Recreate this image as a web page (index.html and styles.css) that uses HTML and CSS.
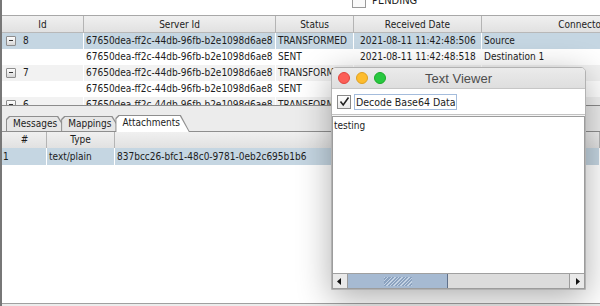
FILE: index.html
```html
<!DOCTYPE html>
<html lang="en">
<head>
    <meta charset="UTF-8">
    <title>Message Browser</title>
    <link rel="stylesheet" href="styles.css">
</head>
<body>
<div class="app">
    <div class="filter-bar">
        <span class="filter-check"></span>
        <span class="filter-label">PENDING</span>
    </div>

    <div class="msg-table">
        <div class="msg-row head">
            <div>Id</div>
            <div>Server Id</div>
            <div>Status</div>
            <div>Received Date</div>
            <div>Connector</div>
        </div>
        <div class="msg-row selected">
            <div class="id-cell"><span class="toggle"></span>8</div>
            <div>67650dea-ff2c-44db-96fb-b2e1098d6ae8</div>
            <div>TRANSFORMED</div>
            <div class="date">2021-08-11 11:42:48:506</div>
            <div>Source</div>
        </div>
        <div class="msg-row">
            <div class="id-cell"></div>
            <div>67650dea-ff2c-44db-96fb-b2e1098d6ae8</div>
            <div>SENT</div>
            <div class="date">2021-08-11 11:42:48:518</div>
            <div>Destination 1</div>
        </div>
        <div class="msg-row alt">
            <div class="id-cell"><span class="toggle"></span>7</div>
            <div>67650dea-ff2c-44db-96fb-b2e1098d6ae8</div>
            <div>TRANSFORMED</div>
            <div class="date">2021-08-11 11:42:48:402</div>
            <div>Source</div>
        </div>
        <div class="msg-row">
            <div class="id-cell"></div>
            <div>67650dea-ff2c-44db-96fb-b2e1098d6ae8</div>
            <div>SENT</div>
            <div class="date">2021-08-11 11:42:48:411</div>
            <div>Destination 1</div>
        </div>
        <div class="msg-row alt">
            <div class="id-cell"><span class="toggle"></span>6</div>
            <div>67650dea-ff2c-44db-96fb-b2e1098d6ae8</div>
            <div>TRANSFORMED</div>
            <div class="date">2021-08-11 11:42:48:300</div>
            <div>Source</div>
        </div>
    </div>

    <div class="lower">
        <div class="tabs">
            <div class="tab">Messages</div>
            <div class="tab">Mappings</div>
            <div class="tab active">Attachments</div>
        </div>
        <div class="attach">
            <div class="att-row head">
                <div>#</div>
                <div>Type</div>
                <div></div>
            </div>
            <div class="att-row selected">
                <div>1</div>
                <div>text/plain</div>
                <div>837bcc26-bfc1-48c0-9781-0eb2c695b1b6</div>
            </div>
        </div>
    </div>

    <div class="viewer">
        <div class="titlebar">
            <span class="light red"></span>
            <span class="light yellow"></span>
            <span class="light green"></span>
            <span class="title">Text Viewer</span>
        </div>
        <div class="decode-row">
            <span class="check">
                <svg width="11" height="11" viewBox="0 0 11 11"><polyline points="1.5,5.5 4.2,9 9.5,1.5" fill="none" stroke="#222" stroke-width="1.6"/></svg>
            </span>
            <span class="decode-label">Decode Base64 Data</span>
        </div>
        <div class="text-area">
            <div class="text-body">testing</div>
            <div class="hscroll">
                <div class="sb-btn sb-left">
                    <svg width="6" height="7" viewBox="0 0 6 7"><polygon points="0,3.5 4,0 4,7" fill="#111"/></svg>
                </div>
                <div class="sb-thumb"><div class="sb-grip"></div></div>
                <div class="sb-track"></div>
                <div class="sb-btn sb-right">
                    <svg width="6" height="7" viewBox="0 0 6 7"><polygon points="2,0 6,3.5 2,7" fill="#111"/></svg>
                </div>
            </div>
        </div>
    </div>
</div>
</body>
</html>
```

FILE: styles.css
```css
body {
    margin: 0;
    width: 600px;
    height: 306px;
    overflow: hidden;
    font-family: "DejaVu Sans", sans-serif;
    font-stretch: condensed;
    font-size: 10px;
    color: #1c1c1c;
}
.app {
    position: relative;
    height: 306px;
    border-left: 2px solid #777;
    display: flex;
    flex-direction: column;
    background: #ececec;
}
.filter-bar {
    height: 15px;
    width: 596px;
    background: #fff;
    border-bottom: 1px solid #a8a8a8;
    border-right: 1px solid #a8a8a8;
    display: flex;
    align-items: flex-end;
    padding-left: 350px;
    box-sizing: content-box;
    overflow: hidden;
}
.filter-check {
    width: 12px;
    height: 12px;
    border: 1px solid #9a9a9a;
    background: #fafafa;
    margin-bottom: 7px;
}
.filter-label {
    margin-left: 6px;
    font-size: 11px;
    line-height: 12px;
    margin-bottom: 8px;
}
.msg-table {
    height: 89px;
    overflow: hidden;
    background: #fff;
    border-bottom: 1px solid #8c8c8c;
}
.msg-row {
    display: grid;
    grid-template-columns: 82px 192px 78px 128px 200px;
    height: 16px;
    line-height: 16px;
    white-space: nowrap;
}
.msg-row > div {
    overflow: hidden;
    padding-left: 2px;
    border-right: 1px solid #fff;
}
.msg-row .date {
    padding-left: 6px;
}
.msg-row.head {
    height: 17px;
    line-height: 17px;
    background: linear-gradient(#f0f0f0, #e1e1e1);
    border-bottom: 1px solid #b8b8b8;
    box-sizing: border-box;
}
.msg-row.head > div {
    text-align: center;
    padding-left: 0;
    border-right: 1px solid #b4b4b4;
}
.selected {
    background: #c5d6e2;
}
.alt {
    background: #f2f2f2;
}
.id-cell {
    display: flex;
    align-items: center;
}
.toggle {
    position: relative;
    width: 8px;
    height: 8px;
    margin: 0 7px 0 2px;
    border: 1px solid #8d8d8d;
    border-radius: 1px;
    background: linear-gradient(#fff, #d6d6d6);
}
.toggle::after {
    content: "";
    position: absolute;
    left: 2px;
    top: 3px;
    width: 4px;
    height: 1px;
    background: #333;
}
.lower {
    flex: 1;
    display: flex;
    flex-direction: column;
    padding-top: 9px;
}
.tabs {
    display: flex;
    align-items: flex-end;
    height: 16px;
    padding-left: 4px;
    border-bottom: 1px solid #8e8e8e;
}
.tab {
    position: relative;
    z-index: 1;
    height: 15px;
    line-height: 15px;
    padding: 0 10px 0 7px;
    margin-right: -6px;
}
.tab::before,
.tab::after {
    content: "";
    position: absolute;
    z-index: -1;
    clip-path: polygon(0 3px, 3px 0, calc(100% - 9px) 0, 100% 100%, 0 100%);
}
.tab::before {
    inset: 0;
    background: #8e8e8e;
}
.tab::after {
    inset: 1px 1px 0 1px;
    background: #e6e6e6;
}
.tab.active {
    z-index: 2;
    height: 17px;
    line-height: 16px;
    margin-bottom: -1px;
}
.tab.active::after {
    background: #fff;
}
.attach {
    flex: 1;
    background: #fff;
    border-bottom: 1px solid #a0a0a0;
    margin-bottom: 2px;
}
.att-row {
    display: grid;
    grid-template-columns: 45px 68px 1fr;
    height: 17px;
    line-height: 17px;
    white-space: nowrap;
}
.att-row > div {
    padding-left: 2px;
    border-right: 1px solid #fff;
}
.att-row.head {
    height: 16px;
    line-height: 16px;
    background: linear-gradient(#f0f0f0, #e1e1e1);
}
.att-row.head > div {
    text-align: center;
    padding-left: 0;
    border-right: 1px solid #b4b4b4;
}
.att-row > div:first-child {
    padding-left: 1px;
}
.viewer {
    position: absolute;
    z-index: 5;
    left: 329px;
    top: 67px;
    width: 255px;
    height: 223px;
    box-sizing: border-box;
    border: 1px solid #b2b2b2;
    border-radius: 5px 5px 0 0;
    background: #f6f6f6;
    box-shadow: 0 8px 34px rgba(0, 0, 0, 0.32);
    display: grid;
    grid-template-rows: 21px 26px 1fr;
}
.titlebar {
    position: relative;
    display: flex;
    align-items: center;
    padding-left: 6px;
    background: linear-gradient(#ebebeb, #dedede);
    border-bottom: 1px solid #c6c6c6;
    border-radius: 4px 4px 0 0;
}
.light {
    width: 12px;
    height: 12px;
    border-radius: 50%;
    margin-right: 6px;
    box-sizing: border-box;
}
.red { background: #fc5f57; border: 1px solid #e0443e; }
.yellow { background: #fdbc2e; border: 1px solid #dea123; }
.green { background: #28c840; border: 1px solid #1aab29; }
.title {
    position: absolute;
    left: 0;
    right: 0;
    text-align: center;
    font-family: "Liberation Sans", sans-serif;
    font-stretch: normal;
    font-size: 13px;
    color: #4d4d4d;
}
.decode-row {
    display: flex;
    align-items: center;
    padding-left: 5px;
    background: #fff;
    border-bottom: 1px solid #c2c2c2;
}
.check {
    width: 12px;
    height: 12px;
    border: 1px solid #8a8a8a;
    background: linear-gradient(#fff, #e9e9e9);
    display: flex;
    align-items: center;
    justify-content: center;
}
.decode-label {
    margin-left: 3px;
    padding: 1px 1px;
    border: 1px solid #a4bcdc;
    font-size: 10.5px;
}
.text-area {
    margin-top: 1px;
    background: #fff;
    border: 1px solid #9c9c9c;
    display: grid;
    grid-template-rows: 1fr 15px;
    min-height: 0;
}
.text-body {
    padding: 3px 1px;
    background: #fff;
}
.hscroll {
    display: flex;
    background: #dcdcdc;
    border-top: 1px solid #a0a0a0;
}
.sb-btn {
    width: 14px;
    display: flex;
    align-items: center;
    justify-content: center;
    background: #e9e9e9;
}
.sb-left {
    border-right: 1px solid #9c9c9c;
}
.sb-right {
    border-left: 1px solid #9c9c9c;
}
.sb-thumb {
    width: 99px;
    display: flex;
    align-items: center;
    justify-content: center;
    background: #a6bad2;
    border-right: 1px solid #5f708a;
}
.sb-grip {
    width: 28px;
    height: 9px;
    background: repeating-linear-gradient(135deg, #c4d3e4 0 1px, #8ca3c0 1px 2.5px);
}
.sb-track {
    flex: 1;
    background: #dcdcdc;
}
```
